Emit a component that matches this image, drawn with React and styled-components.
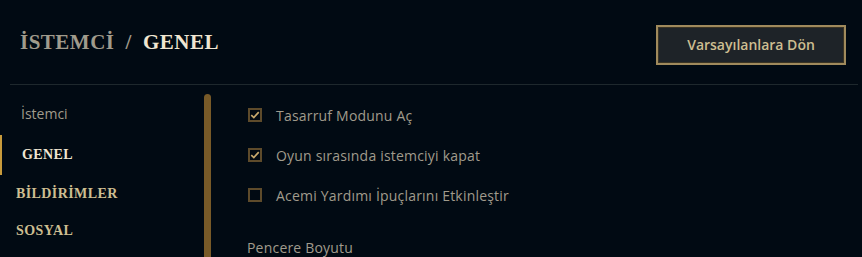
import React from 'react'
import styled, { createGlobalStyle } from 'styled-components';

const GlobalStyle = createGlobalStyle`
    html, body {
        margin:0;
        padding:0;
        background:#010a13;
        overflow:hidden;
    }
`;

const sideItems = [
    { label: 'İstemci', kind: 'group' },
    { label: 'GENEL', kind: 'active' },
    { label: 'BİLDİRİMLER', kind: 'section' },
    { label: 'SOSYAL', kind: 'section' },
];

const options = [
    { label: 'Tasarruf Modunu Aç', checked: true },
    { label: 'Oyun sırasında istemciyi kapat', checked: true },
    { label: 'Acemi Yardımı İpuçlarını Etkinleştir', checked: false },
];

function Check({ checked }) {
    return (
        <Box>
            {checked && (
                <svg width="12" height="10" viewBox="0 0 12 10">
                    <path d="M1.5 5.2 L4.6 8 L10.5 1.5" fill="none" stroke="#c8aa6e" strokeWidth="2" />
                </svg>
            )}
        </Box>
    )
}

function App() {
    return (
        <Page>
            <GlobalStyle />
            <Header>
                <Title>
                    <Crumb>İSTEMCİ</Crumb>
                    <Slash>/</Slash>
                    <Current>GENEL</Current>
                </Title>
                <ResetButton>Varsayılanlara Dön</ResetButton>
            </Header>
            <Divider />
            <Body>
                <Sidebar>
                    {sideItems.map(item => (
                        <SideItem key={item.label} kind={item.kind}>{item.label}</SideItem>
                    ))}
                </Sidebar>
                <Scrollbar />
                <Content>
                    {options.map(opt => (
                        <Option key={opt.label}>
                            <Check checked={opt.checked} />
                            <OptionLabel>{opt.label}</OptionLabel>
                        </Option>
                    ))}
                    <SubHeading>Pencere Boyutu</SubHeading>
                </Content>
            </Body>
        </Page>
    )
}
export default App

const Page = styled.div`
    width:862px;
    height:257px;
    background:#010a13;
    font-family:"Open Sans", "Liberation Sans", sans-serif;
    overflow:hidden;
`;

const Header = styled.div`
    display:flex;
    align-items:center;
    justify-content:space-between;
    height:84px;
    padding:0 16px 0 20px;
    box-sizing:border-box;
`;

const Title = styled.div`
    display:flex;
    align-items:baseline;
    font-family:"Liberation Serif", "DejaVu Serif", serif;
    font-weight:bold;
    font-size:21px;
    letter-spacing:0.5px;
    padding-top:1px;
`;

const Crumb = styled.span`
    color:#a09b8c;
`;

const Slash = styled.span`
    color:#a09b8c;
    margin:0 11px 0 11px;
`;

const Current = styled.span`
    color:#f0e6d2;
`;

const ResetButton = styled.button`
    width:190px;
    height:40px;
    margin-top:5px;
    background:#1e2328;
    border:2px solid #a08a5c;
    box-shadow:inset 0 0 0 1px #3a3424;
    color:#cdbe91;
    font-family:"Open Sans", "Liberation Sans", sans-serif;
    font-weight:600;
    font-size:14px;
    cursor:pointer;
`;

const Divider = styled.div`
    height:1px;
    margin-left:10px;
    margin-right:4px;
    background:#1e282d;
`;

const Body = styled.div`
    display:flex;
    height:172px;
`;

const Sidebar = styled.div`
    width:204px;
    display:flex;
    flex-direction:column;
    padding-top:18px;
`;

const SideItem = styled.div`
    display:flex;
    align-items:center;
    box-sizing:border-box;
    height:${p => p.kind === 'active' ? '40px' : p.kind === 'group' ? '20px' : '37px'};
    margin-bottom:${p => p.kind === 'group' ? '12px' : '0'};
    padding-left:${p => p.kind === 'group' ? '21px' : p.kind === 'active' ? '20px' : '16px'};
    border-left:${p => p.kind === 'active' ? '2px solid #c89b3c' : 'none'};
    font-family:${p => p.kind === 'group' ? '"Open Sans", "Liberation Sans", sans-serif' : '"Liberation Serif", "DejaVu Serif", serif'};
    font-weight:${p => p.kind === 'group' ? 'normal' : 'bold'};
    font-size:14px;
    color:${p => p.kind === 'group' ? '#a09b8c' : p.kind === 'active' ? '#f0e6d2' : '#cdbe91'};
    letter-spacing:${p => p.kind === 'group' ? '0' : '0.4px'};
`;

const Scrollbar = styled.div`
    width:7px;
    margin-top:9px;
    background:#785a28;
    border-radius:4px 4px 0 0;
`;

const Content = styled.div`
    display:flex;
    flex-direction:column;
    padding:20px 0 0 37px;
`;

const Option = styled.div`
    display:flex;
    align-items:center;
    height:20px;
    margin-bottom:20px;
`;

const Box = styled.div`
    width:14px;
    height:14px;
    box-sizing:border-box;
    border:2px solid #5e4b2b;
    display:flex;
    align-items:center;
    justify-content:center;
    margin-right:14px;
`;

const OptionLabel = styled.span`
    color:#a09b8c;
    font-size:14px;
    letter-spacing:0.2px;
`;

const SubHeading = styled.div`
    color:#a09b8c;
    font-size:14px;
    letter-spacing:0.2px;
    margin-top:13px;
    margin-left:-1px;
`;
